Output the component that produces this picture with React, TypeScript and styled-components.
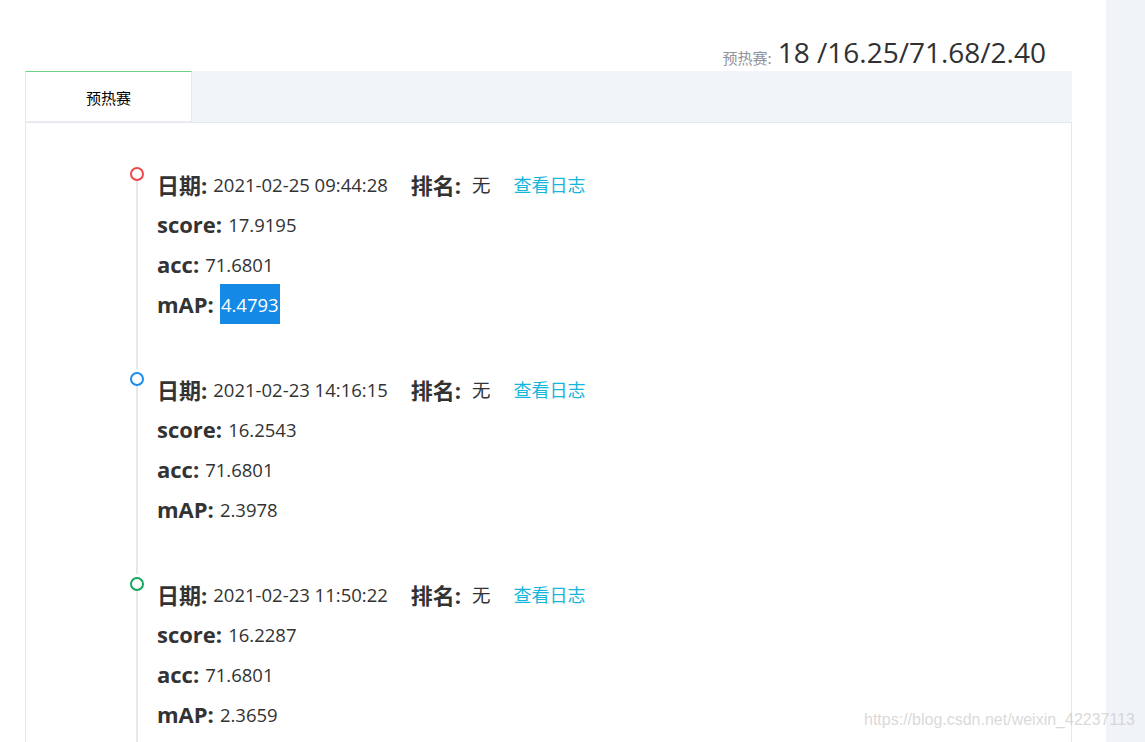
import React from "react";
import styled, { createGlobalStyle } from "styled-components";

const Global = createGlobalStyle`
  html, body { margin: 0; padding: 0; background: #fff; }
  body {
    font-family: "Open Sans", "Noto Sans CJK SC", sans-serif;
    color: #333;
    overflow: hidden;
  }
`;

const Page = styled.div`
  display: flex;
  width: 1145px;
  min-height: 742px;
  position: relative;
`;

const Main = styled.main`
  flex: 1;
  padding-left: 25px;
  padding-right: 34px;
`;

const Aside = styled.aside`
  width: 39px;
  background: #f0f3f8;
`;

const Header = styled.div`
  height: 71px;
  display: flex;
  justify-content: flex-end;
  align-items: flex-end;
  padding: 0 26px 5px 0;
  box-sizing: border-box;
`;

const HeaderLabel = styled.span`
  font-family: "Noto Sans CJK SC", sans-serif;
  font-size: 15px;
  color: #909399;
  line-height: 1;
  margin-right: 6px;
  padding-bottom: 1px;
`;

const HeaderValue = styled.span`
  font-size: 28px;
  line-height: 28px;
  color: #303133;
`;

const TabBar = styled.div`
  display: flex;
  height: 51px;
  background: #f1f4f9;
  box-sizing: border-box;
`;

const Tab = styled.div<{ $active?: boolean }>`
  width: 167px;
  display: flex;
  align-items: center;
  justify-content: center;
  box-sizing: border-box;
  background: ${(p) => (p.$active ? "#fff" : "transparent")};
  border-top: 1px solid ${(p) => (p.$active ? "#6dd186" : "transparent")};
  border-left: 1px solid #e6e8ec;
  border-right: 1px solid #e6e8ec;
  border-bottom: 1px solid #ebedf0;
  font-family: "Noto Sans CJK SC", sans-serif;
  font-size: 15px;
  color: #000;
  padding-top: 2px;
`;

const Panel = styled.div`
  border: 1px solid #e4e7ed;
  border-bottom: none;
  padding: 41px 0 0 104px;
  min-height: 640px;
`;

const Timeline = styled.ul`
  list-style: none;
  margin: 0;
  padding: 0;
`;

const Item = styled.li`
  display: grid;
  grid-template-columns: 14px 1fr;
  column-gap: 13px;
`;

const Rail = styled.div`
  display: flex;
  flex-direction: column;
  align-items: center;
  padding-top: 3px;
`;

const Dot = styled.span<{ $color: string }>`
  width: 14px;
  height: 14px;
  box-sizing: border-box;
  border-radius: 50%;
  border: 2px solid ${(p) => p.$color};
  background: #fff;
  flex: none;
`;

const Tail = styled.span`
  flex: 1;
  width: 2px;
  background: #e4e7ed;
  margin-left: -1px;
`;

const Content = styled.div`
  padding-bottom: 45px;
`;

const Row = styled.div`
  display: flex;
  align-items: center;
  height: 40px;
  gap: 23px;
`;

const Field = styled.span`
  display: inline-flex;
  align-items: center;
  height: 40px;
`;

const Label = styled.b`
  font-size: 22px;
  font-weight: 700;
  color: #333;
  margin-right: 6px;
`;

const Value = styled.span<{ $selected?: boolean }>`
  font-size: 18.5px;
  color: #333;
  display: inline-flex;
  align-items: center;
  height: 40px;
  ${(p) =>
    p.$selected
      ? `background: #1489e6; color: #fff; padding: 0 1px;`
      : ""}
`;

const LogLink = styled.a`
  font-family: "Noto Sans CJK SC", sans-serif;
  font-size: 18px;
  color: #16b5dc;
  text-decoration: none;
  cursor: pointer;
`;

const Watermark = styled.div`
  position: absolute;
  left: 864px;
  top: 711px;
  font-family: "Liberation Sans", Arial, sans-serif;
  font-size: 16px;
  color: rgba(200, 200, 200, 0.7);
  pointer-events: none;
`;

type Entry = {
  date: string;
  score: string;
  acc: string;
  map: string;
  color: string;
  selected?: boolean;
};

const entries: Entry[] = [
  { date: "2021-02-25 09:44:28", score: "17.9195", acc: "71.6801", map: "4.4793", color: "#f0474b", selected: true },
  { date: "2021-02-23 14:16:15", score: "16.2543", acc: "71.6801", map: "2.3978", color: "#1a8cf0" },
  { date: "2021-02-23 11:50:22", score: "16.2287", acc: "71.6801", map: "2.3659", color: "#14a75c" },
];

export default function App() {
  return (
    <>
      <Global />
      <Page>
        <Main>
          <Header>
            <HeaderLabel>预热赛:</HeaderLabel>
            <HeaderValue>18 /16.25/71.68/2.40</HeaderValue>
          </Header>
          <TabBar>
            <Tab $active>预热赛</Tab>
          </TabBar>
          <Panel>
            <Timeline>
              {entries.map((e) => (
                <Item key={e.date}>
                  <Rail>
                    <Dot $color={e.color} />
                    <Tail />
                  </Rail>
                  <Content>
                    <Row>
                      <Field>
                        <Label>日期:</Label>
                        <Value>{e.date}</Value>
                      </Field>
                      <Field>
                        <Label>排名:</Label>
                        <Value>&nbsp;无</Value>
                      </Field>
                      <LogLink>查看日志</LogLink>
                    </Row>
                    <Row>
                      <Field>
                        <Label>score:</Label>
                        <Value>{e.score}</Value>
                      </Field>
                    </Row>
                    <Row>
                      <Field>
                        <Label>acc:</Label>
                        <Value>{e.acc}</Value>
                      </Field>
                    </Row>
                    <Row>
                      <Field>
                        <Label>mAP:</Label>
                        <Value $selected={e.selected}>{e.map}</Value>
                      </Field>
                    </Row>
                  </Content>
                </Item>
              ))}
            </Timeline>
          </Panel>
        </Main>
        <Aside />
        <Watermark>https://blog.csdn.net/weixin_42237113</Watermark>
      </Page>
    </>
  );
}
